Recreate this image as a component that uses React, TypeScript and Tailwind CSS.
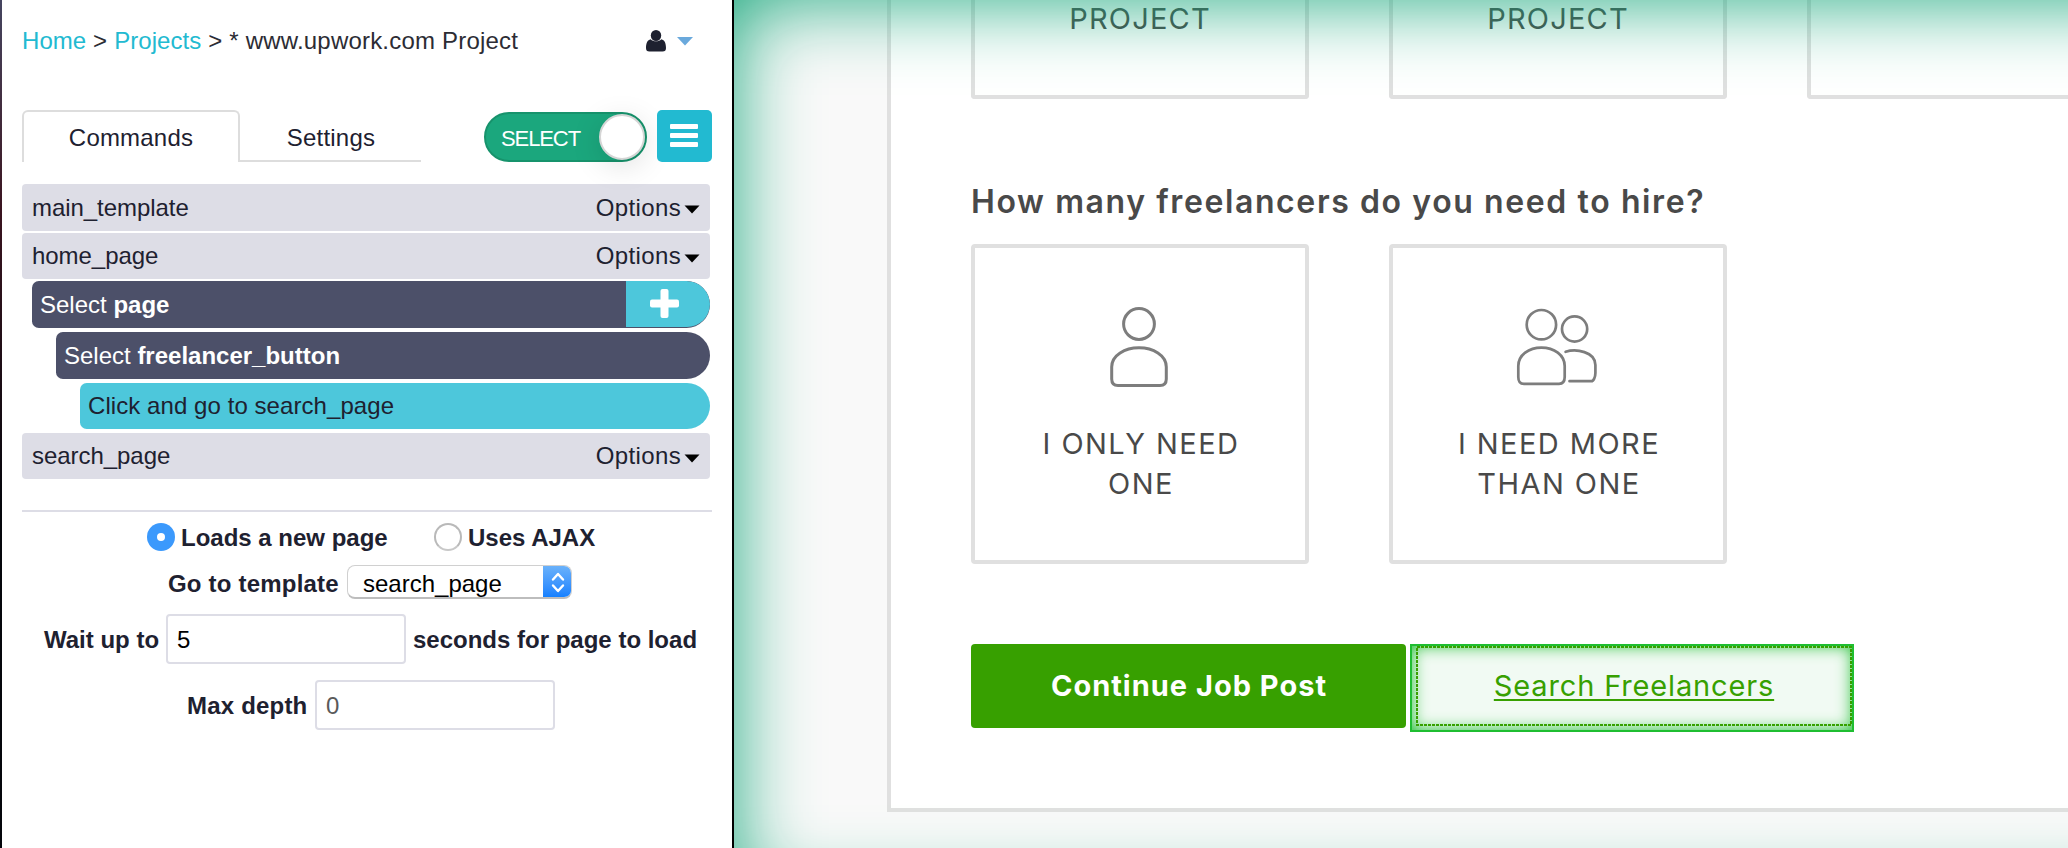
import React from 'react';

const template = 'flex w-[688px] items-center justify-between rounded-[4px] bg-[#dddde6] pl-[10px] pr-[10px] text-[24px] text-[#1e2130]';

function Template({ name, className }: { name: string; className: string }) {
  return (
    <div className={`${template} ${className}`}>
      <span className="tracking-[-0.05px]">{name}</span>
      <span className="flex items-center gap-[3px] tracking-[0.35px]">
        Options
        <svg width="16" height="9" viewBox="0 0 16 9" className="mt-[4px]">
          <path d="M0.5 0.5h15L8 8.5z" fill="#000" />
        </svg>
      </span>
    </div>
  );
}

function PersonIcon() {
  return (
    <svg width="60" height="82" viewBox="0 0 60 82" fill="none" stroke="#7d7d7d" strokeWidth="3" className="-ml-[2px]">
      <circle cx="30" cy="17" r="15.4" />
      <path d="M30 40.8C44 40.8 57.3 48 57.3 60V72C57.3 76 55.5 78.5 51 78.5H9C4.500 78.5 2.700 76 2.700 72V60C2.700 48 16 40.800 30 40.800Z" />
    </svg>
  );
}

function PeopleIcon() {
  return (
    <svg width="82" height="82" viewBox="0 0 82 82" fill="none" stroke="#7d7d7d" strokeWidth="2.700" strokeLinecap="round" className="-ml-[3px]">
      <circle cx="25.400" cy="17.700" r="14.700" />
      <circle cx="58.600" cy="22" r="12.600" />
      <path d="M25.400 40.600C38 40.600 48.700 48 48.700 59V70C48.700 74.500 47 76.800 43 76.800H8C4 76.800 2.300 74.500 2.300 70V59C2.300 48 13 40.600 25.400 40.600Z" />
      <path d="M49.600 44.800C60 41.500 79.400 44.500 79.400 58V66C79.400 70 77.500 74.200 75.500 74.200H53.500" />
    </svg>
  );
}

function Card({ lines, children }: { lines: string[]; children: React.ReactNode }) {
  return (
    <div className="flex h-[320px] w-[338px] flex-col items-center rounded-[4px] border-4 border-[#e0e0e0] pt-[59px]">
      {children}
      <div className="mt-[35px] pl-[2px] text-center text-[29px] leading-[40px] tracking-[1.45px] text-[#494949]">
        {lines.map((l) => (
          <div key={l}>{l}</div>
        ))}
      </div>
    </div>
  );
}

export default function App() {
  return (
    <div className="flex h-[848px] w-[2068px] overflow-hidden bg-white">
      <div className="w-[2px] shrink-0 bg-linear-to-b from-[#454560] via-[#3a1420] via-25% to-[#05060c] to-60%" />
      <aside className="w-[730px] shrink-0 pl-[20px] font-['Liberation_Sans',sans-serif]">
        <header className="flex h-[82px] w-[690px] items-center justify-between">
          <nav className="whitespace-pre text-[24px] tracking-[0.2px] text-[#2c2c34]">
            <span className="tracking-[0.05px] text-[#22bad1]">Home</span> &gt; <span className="tracking-[0.05px] text-[#22bad1]">Projects</span> &gt; * www.upwork.com Project
          </nav>
          <div className="mr-[19px] flex items-center gap-[11px]">
            <svg width="20" height="22" viewBox="0 0 20 22" fill="#1e2130">
              <path d="M4.600 9.200C1.500 10 0 13 0 18C0 20.500 1 21.500 3.500 21.500H16.500C19 21.500 20 20.500 20 18C20 13 18.500 10 15.400 9.200C12.500 12 7.500 12 4.600 9.200Z" />
              <ellipse cx="10" cy="5.500" rx="5.200" ry="5.500" />
            </svg>
            <svg width="16" height="9" viewBox="0 0 16 9">
              <path d="M0 0h16L8 8.500z" fill="#6aa9dc" />
            </svg>
          </div>
        </header>

        <div className="mt-[28px] flex h-[52px] w-[690px] text-[24px] text-[#1e2130]">
          <div className="flex w-[218px] items-center justify-center rounded-t-[6px] border-2 border-b-0 border-[#dddddd] pt-[1px] tracking-[0.2px]">Commands</div>
          <div className="flex w-[181px] items-center justify-center border-b-2 border-[#dddddd] pl-[1px] pt-[5px] tracking-[0.2px]">Settings</div>
          <div className="ml-[63px] mt-[2px] flex h-[50px] w-[163px] items-center justify-between rounded-full border-2 border-[#17936c] bg-[#1ba77d] pl-[15px]">
            <span className="pt-[2px] text-[22px] tracking-[-1.1px] text-white">SELECT</span>
            <span className="size-[46px] rounded-full border-2 border-[#d5d5d5] bg-white shadow-[0_6px_30px_rgba(0,0,0,0.13)]" />
          </div>
          <div className="ml-[10px] flex w-[55px] flex-col items-center justify-center gap-[4px] rounded-[5px] bg-[#22bad1] pb-[1px] pr-[1px]">
            <span className="h-[5px] w-[28px] rounded-[1px] bg-white" />
            <span className="h-[5px] w-[28px] rounded-[1px] bg-white" />
            <span className="h-[5px] w-[28px] rounded-[1px] bg-white" />
          </div>
        </div>

        <div className="mt-[22px] text-[24px]">
          <Template name="main_template" className="h-[47px]" />
          <Template name="home_page" className="mt-[2px] h-[46px]" />
          <div className="ml-[10px] mt-[2px] flex h-[47px] w-[678px] justify-between overflow-hidden rounded-l-[7px] rounded-r-[24px] bg-[#4c5069] text-white">
            <span className="flex items-center whitespace-pre pl-[8px]">Select <b>page</b></span>
            <span className="flex h-[46px] w-[84px] items-center rounded-r-[24px] bg-[#4dc7db] pb-[2px] pl-[24px]">
              <svg width="29" height="29" viewBox="0 0 29 29" fill="#fff">
                <rect x="10.500" y="0" width="8" height="29" rx="2" />
                <rect x="0" y="10.500" width="29" height="8" rx="2" />
              </svg>
            </span>
          </div>
          <div className="ml-[34px] mt-[4px] flex h-[47px] w-[654px] items-center whitespace-pre rounded-l-[7px] rounded-r-[24px] bg-[#4c5069] pl-[8px] text-white">Select <b>freelancer_button</b></div>
          <div className="ml-[58px] mt-[4px] flex h-[46px] w-[630px] items-center rounded-l-[7px] rounded-r-[24px] bg-[#4dc7db] pl-[8px] tracking-[0.07px] text-[#1e2130]">Click and go to search_page</div>
          <Template name="search_page" className="mt-[4px] h-[46px]" />
        </div>

        <div className="mt-[31px] h-[2px] w-[690px] bg-[#dddde6]" />

        <form className="text-[24px] font-bold text-[#1e2130]">
          <div className="mt-[11px] flex h-[28px] items-center pl-[125px]">
            <span className="flex size-[28px] items-center justify-center rounded-full bg-[#3b99fc]">
              <span className="size-[8px] rounded-full bg-white" />
            </span>
            <span className="ml-[6px] w-[253px] pt-[2px]">Loads a new page</span>
            <span className="size-[28px] rounded-full border-2 border-[#b9b9b9] border-b-[#c8c8c8] bg-white" />
            <span className="ml-[6px] pt-[2px]">Uses AJAX</span>
          </div>
          <div className="mt-[14px] flex h-[34px] items-center pl-[146px]">
            <span className="w-[179px] pt-[3px] tracking-[0.2px]">Go to template</span>
            <span className="flex h-[34px] w-[225px] justify-between overflow-hidden rounded-[8px] border border-b-2 border-[#d0d0d0] border-b-[#bdbdbd] font-normal text-black">
              <span className="pl-[15px]">search_page</span>
              <span className="-mb-[2px] -mr-px -mt-px flex w-[29px] items-center justify-center bg-linear-to-b from-[#6cb3fa] to-[#077dff]">
                <svg width="14" height="21" viewBox="0 0 14 21" fill="none" stroke="#fff" strokeWidth="2.400" strokeLinecap="round" strokeLinejoin="round">
                  <path d="M2 7.500L7 2l5 5.500M2 13.500L7 19l5-5.500" />
                </svg>
              </span>
            </span>
          </div>
          <div className="mt-[15px] flex h-[50px] items-center pl-[22px]">
            <span className="w-[122px] pt-[2px]">Wait up to</span>
            <span className="flex h-[50px] w-[240px] items-center rounded-[4px] border-2 border-[#dddde6] pl-[9px] pt-[2px] font-normal text-black">5</span>
            <span className="ml-[7px] pt-[2px]">seconds for page to load</span>
          </div>
          <div className="mt-[16px] flex h-[50px] items-center pl-[165px]">
            <span className="w-[128px] pt-[2px] tracking-[0.2px]">Max depth</span>
            <span className="flex h-[50px] w-[240px] items-center rounded-[4px] border-2 border-[#dddde6] pl-[9px] pt-[2px] font-normal text-[#5a5a5a]">0</span>
          </div>
        </form>
      </aside>
      <div className="w-[2px] shrink-0 bg-black" />

      <main className="relative h-[848px] w-[1334px] shrink-0 overflow-hidden bg-[#f9f9f9] font-['Inter',sans-serif] text-[#494949]">
        <section className="ml-[153px] h-[812px] w-[1300px] border-b-4 border-l-4 border-[#e0e0e0] bg-white pl-[80px]">
          <div className="flex gap-[80px] text-[29px] leading-[37px] tracking-[1.2px]">
            <div className="flex h-[99px] w-[338px] shrink-0 justify-center rounded-b-[4px] border-4 border-t-0 border-[#e0e0e0]">PROJECT</div>
            <div className="flex h-[99px] w-[338px] shrink-0 justify-center rounded-b-[4px] border-4 border-t-0 border-[#e0e0e0]">PROJECT</div>
            <div className="h-[99px] w-[338px] shrink-0 rounded-b-[4px] border-4 border-t-0 border-[#e0e0e0]" />
          </div>
          <h2 className="mt-[81px] h-[44px] whitespace-nowrap text-[32px] font-semibold leading-[44px] tracking-[1.6px]">How many freelancers do you need to hire?</h2>
          <div className="mt-[20px] flex gap-[80px]">
            <Card lines={['I ONLY NEED', 'ONE']}><PersonIcon /></Card>
            <Card lines={['I NEED MORE', 'THAN ONE']}><PeopleIcon /></Card>
          </div>
          <div className="mt-[80px] flex gap-[4px]">
            <button className="h-[84px] w-[435px] rounded-[4px] bg-[#37a000] pl-[1px] text-[29px] font-bold tracking-[1px] text-white">Continue Job Post</button>
            <a className="relative flex h-[88px] w-[444px] items-start justify-center border-2 border-[#1fbe31] bg-[#f1faf3] pl-[4px] text-[29px] leading-[80px] tracking-[0.85px] text-[#37a000] underline underline-offset-[3px] shadow-[inset_0_0_16px_#1fbe31]">
              Search Freelancers
              <svg className="absolute left-[4px] top-0" width="436" height="80" fill="none" stroke="#37a000" strokeWidth="2" strokeDasharray="3 1">
                <rect x="1" y="1" width="434" height="78" />
              </svg>
            </a>
          </div>
        </section>
        <div className="pointer-events-none absolute -right-[200px] left-0 top-0 h-[900px] shadow-[inset_0_0_80px_#1ba87d]" />
      </main>
    </div>
  );
}
